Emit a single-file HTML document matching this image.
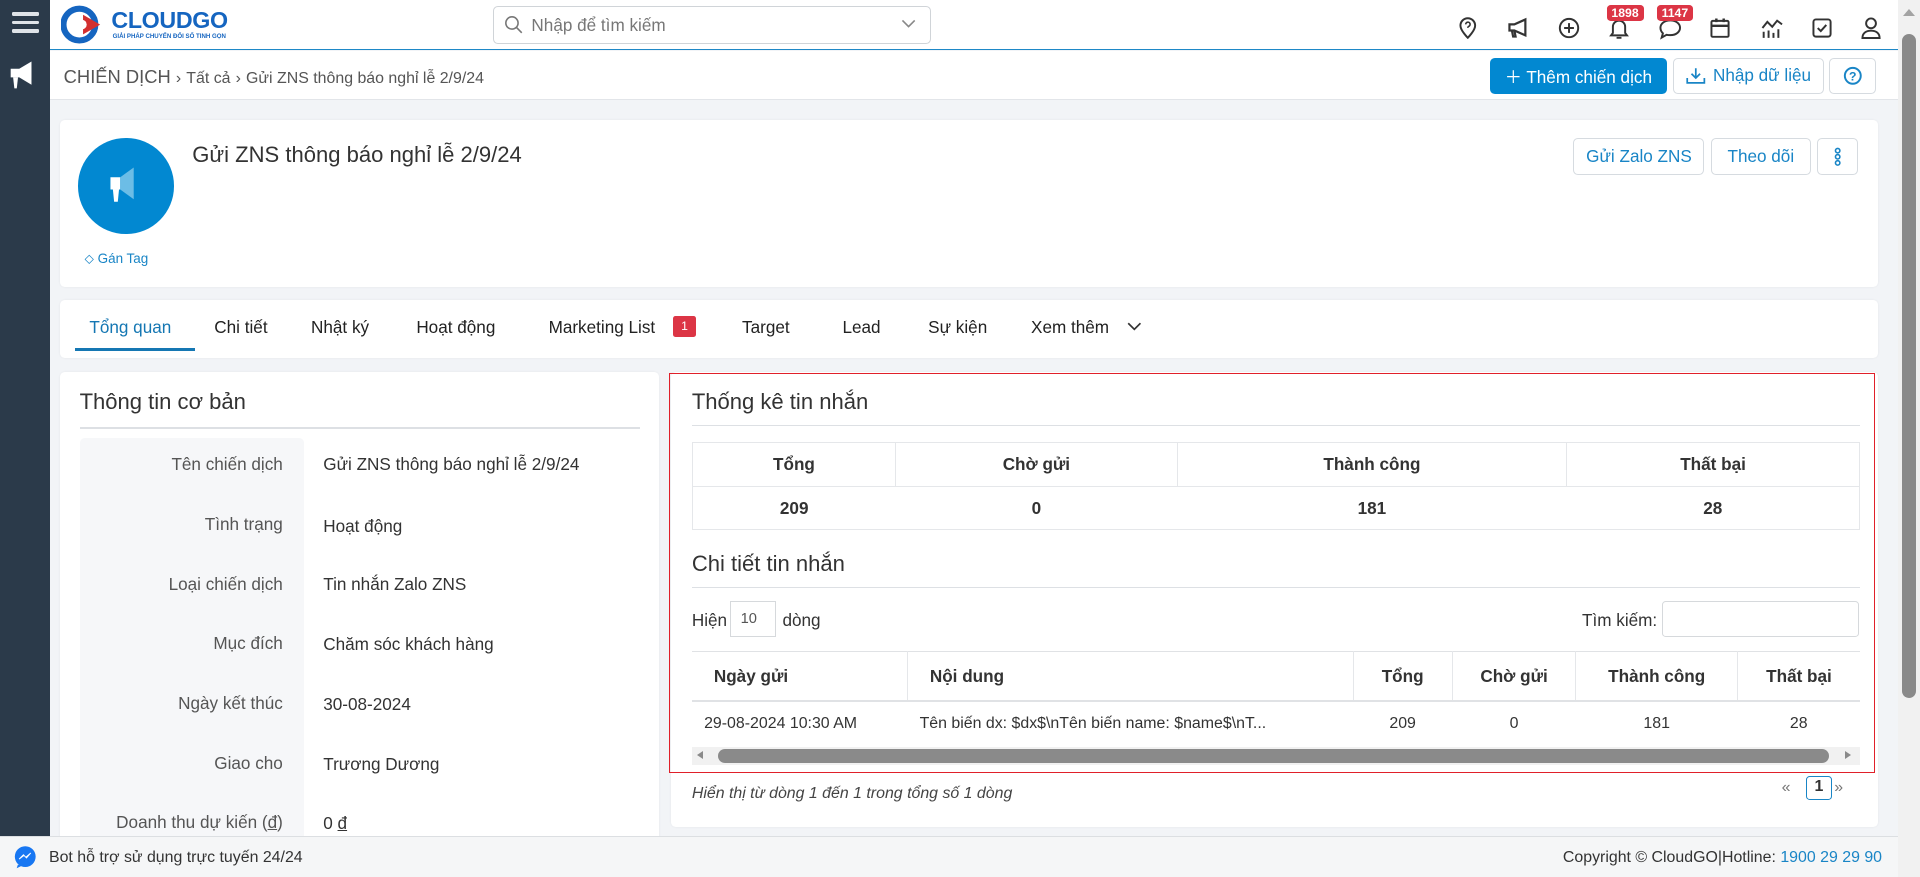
<!DOCTYPE html>
<html><head><meta charset="utf-8"><style>
html{zoom:1.22449}
*{box-sizing:border-box;margin:0;padding:0}
body{width:1568px;height:716px;overflow:hidden;position:relative;background:#f2f4f7;font-family:"Liberation Sans",sans-serif;color:#333;font-size:14px}
.a{position:absolute}
.side{left:0;top:0;width:41px;height:716px;background:#2b3a4a}
.top{left:41px;top:0;width:1509px;height:41px;background:#fff;border-bottom:1px solid #1e88c7}
.bc{left:41px;top:42px;width:1509px;height:40px;background:#fff;border-bottom:1px solid #e2e5e9}
.card{background:#fff;border-radius:4px;box-shadow:0 0 2px rgba(0,0,0,.06)}
.btn{border:1px solid #d6dbe0;border-radius:4px;background:#fff;color:#1985c6;font-size:14px;display:flex;align-items:center;justify-content:center}
.ico{stroke:#333;fill:none;stroke-width:1.6}
.tab{top:259px;font-size:14px;color:#222}
.lbl{width:166px;text-align:right;left:65px;color:#555;font-size:14px}
.val{left:264px;color:#333;font-size:14px}
table{border-collapse:collapse;font-size:14px}
td,th{text-align:center}
</style></head><body>
<div class="a side">
 <div class="a" style="left:10px;top:10px;width:22px;height:3px;background:#dfe3e8;border-radius:1px"></div>
 <div class="a" style="left:10px;top:17px;width:22px;height:3px;background:#dfe3e8;border-radius:1px"></div>
 <div class="a" style="left:10px;top:24px;width:22px;height:3px;background:#dfe3e8;border-radius:1px"></div>
 <svg class="a" style="left:6px;top:48px" width="28" height="30" viewBox="0 0 28 30"><path d="M3 8h7v7H3z M10 8l10-6v19l-10-6z" fill="#fff"/><path d="M5 15h4l-1 9H6z" fill="#fff"/></svg>
</div>
<div class="a top">
 <svg class="a" style="left:9px;top:4px" width="34" height="32" viewBox="0 0 34 32"><circle cx="15" cy="16" r="13" fill="none" stroke="#1565c0" stroke-width="5"/><path d="M18 8l14 8-14 8z" fill="#d32f2f"/><circle cx="17" cy="16" r="4" fill="#fff"/></svg>
 <div class="a" style="left:50px;top:6px;color:#1565c0;font-weight:bold;font-size:19px;letter-spacing:-.3px">CLOUDGO</div>
 <div class="a" style="left:51px;top:27px;color:#1565c0;font-size:5px;font-weight:bold">GIẢI PHÁP CHUYỂN ĐỔI SỐ TINH GỌN</div>
 <div class="a" style="left:362px;top:5px;width:357px;height:31px;border:1px solid #d0d4d8;border-radius:4px"></div>
 <svg class="a" style="left:371px;top:12px" width="16" height="16"><circle cx="6.5" cy="6.5" r="5" stroke="#777" fill="none" stroke-width="1.3"/><path d="M10 10l4.5 4.5" stroke="#777" stroke-width="1.3"/></svg>
 <div class="a" style="left:393px;top:12px;color:#777;font-size:14px">Nhập để tìm kiếm</div>
 <svg class="a" style="left:694px;top:15px" width="14" height="10"><path d="M2 2l5 5 5-5" stroke="#888" fill="none" stroke-width="1.3"/></svg>
 <svg class="a ico" style="left:1150px;top:14px" width="16" height="18" viewBox="0 0 16 18"><path d="M8 17s6-6 6-10A6 6 0 0 0 2 7c0 4 6 10 6 10z"/><path d="M6.3 6a1.8 1.8 0 1 1 2.4 1.7c-.6.3-.7.6-.7 1.2" stroke-width="1.3"/></svg>
 <svg class="a ico" style="left:1190px;top:14px" width="20" height="18" viewBox="0 0 20 18"><path d="M2 6h4l9-4v13l-9-4H2z M4 11l1 5h2l-1-5" stroke-width="1.8"/></svg>
 <svg class="a ico" style="left:1231px;top:14px" width="18" height="18"><circle cx="9" cy="9" r="7.5"/><path d="M9 5v8M5 9h8"/></svg>
 <svg class="a ico" style="left:1272px;top:14px" width="18" height="19"><path d="M4 13V8a5 5 0 0 1 10 0v5l1.5 2h-13z M7 17h4"/></svg>
 <div class="a" style="left:1271px;top:4px;background:#dc3545;color:#fff;font-size:10px;font-weight:bold;padding:1px 4px;border-radius:3px">1898</div>
 <svg class="a ico" style="left:1313px;top:15px" width="20" height="18"><path d="M10 2c5 0 8 2.8 8 6s-3 6-8 6c-1 0-2 0-3-.3L3 16l1-3.5C2.8 11.4 2 10 2 8c0-3.2 3-6 8-6z"/></svg>
 <div class="a" style="left:1312px;top:4px;background:#dc3545;color:#fff;font-size:10px;font-weight:bold;padding:1px 4px;border-radius:3px">1147</div>
 <svg class="a ico" style="left:1355px;top:13px" width="18" height="19"><rect x="2" y="4" width="14" height="13" rx="1"/><path d="M2 8h14M6 2v3M12 2v3" stroke-width="2"/></svg>
 <svg class="a ico" style="left:1396px;top:14px" width="20" height="18"><path d="M2 9l4-5 4 4 4-5 4 3M3 17v-5M7 17v-6M11 17v-4M15 17v-7"/></svg>
 <svg class="a ico" style="left:1438px;top:14px" width="18" height="18"><rect x="2" y="2" width="14" height="14" rx="2"/><path d="M5.5 9l2.5 2.5 4.5-5"/></svg>
 <svg class="a ico" style="left:1478px;top:13px" width="18" height="19"><circle cx="9" cy="6" r="4"/><path d="M2 18c0-4 3-6 7-6s7 2 7 6z"/></svg>
</div>
<div class="a" style="left:1550px;top:0;width:18px;height:716px;background:#f1f1f1"></div>
<div class="a" style="left:1553px;top:28px;width:12px;height:542px;background:#8a8a8a;border-radius:6px"></div>
<div class="a" style="left:1554px;top:7px;width:0;height:0;border-left:5px solid transparent;border-right:5px solid transparent;border-bottom:6px solid #a3a3a3"></div>
<div class="a bc">
 <div class="a" style="left:11px;top:12px;color:#555;font-size:15px">CHIẾN DỊCH <span style="font-size:13px">›</span> <span style="font-size:13px">Tất cả</span> <span style="font-size:13px">›</span> <span style="font-size:13px">Gửi ZNS thông báo nghỉ lễ 2/9/24</span></div>
</div>
<div class="a btn" style="left:1217px;top:47px;width:144px;height:30px;background:#0288d1;border-color:#0288d1;color:#fff">＋ Thêm chiến dịch</div>
<div class="a btn" style="left:1366px;top:47px;width:124px;height:30px">
 <svg width="16" height="14" style="margin-right:6px"><path d="M8 1v8M4.5 5.5L8 9l3.5-3.5M1 9v4h14V9" stroke="#1985c6" fill="none" stroke-width="1.4"/></svg>Nhập dữ liệu</div>
<div class="a btn" style="left:1494px;top:47px;width:38px;height:30px"><svg width="16" height="16"><circle cx="8" cy="8" r="6.5" stroke="#1985c6" fill="none" stroke-width="1.6"/><text x="8" y="12" text-anchor="middle" font-size="10" font-weight="bold" fill="#1985c6" font-family="Liberation Sans">?</text></svg></div>

<div class="a card" style="left:49px;top:98px;width:1485px;height:136px"></div>
<div class="a" style="left:64px;top:113px;width:78px;height:78px;border-radius:50%;background:#0288d1"></div>
<svg class="a" style="left:88px;top:135px" width="32" height="34" viewBox="0 0 32 34"><path d="M2 10h8v10H2z" fill="#fff"/><path d="M10 10l11-8v26l-11-8z" fill="#6cbde6"/><path d="M4 20h5l-1 10H5z" fill="#fff"/></svg>
<div class="a" style="left:157px;top:116px;font-size:18px;color:#333">Gửi ZNS thông báo nghỉ lễ 2/9/24</div>
<div class="a" style="left:69px;top:205px;font-size:11px;color:#1985c6">⬦ Gán Tag</div>
<div class="a btn" style="left:1285px;top:113px;width:107px;height:30px">Gửi Zalo ZNS</div>
<div class="a btn" style="left:1397px;top:113px;width:82px;height:30px">Theo dõi</div>
<div class="a btn" style="left:1484px;top:113px;width:33px;height:30px"><svg width="6" height="16"><circle cx="3" cy="3" r="1.8" fill="none" stroke="#1985c6" stroke-width="1.3"/><circle cx="3" cy="8" r="1.8" fill="none" stroke="#1985c6" stroke-width="1.3"/><circle cx="3" cy="13" r="1.8" fill="none" stroke="#1985c6" stroke-width="1.3"/></svg></div>

<div class="a card" style="left:49px;top:245px;width:1485px;height:47px"></div>
<div class="a tab" style="left:73px;color:#1577b3">Tổng quan</div>
<div class="a" style="left:61px;top:284px;width:98px;height:3px;background:#1577b3"></div>
<div class="a tab" style="left:175px">Chi tiết</div>
<div class="a tab" style="left:254px">Nhật ký</div>
<div class="a tab" style="left:340px">Hoạt động</div>
<div class="a tab" style="left:448px">Marketing List</div>
<div class="a" style="left:550px;top:258px;width:18px;height:17px;background:#dc3545;color:#fff;font-size:10px;text-align:center;line-height:17px;border-radius:2px">1</div>
<div class="a tab" style="left:606px">Target</div>
<div class="a tab" style="left:688px">Lead</div>
<div class="a tab" style="left:758px">Sự kiện</div>
<div class="a tab" style="left:842px">Xem thêm</div>
<svg class="a" style="left:920px;top:263px" width="12" height="8"><path d="M1 1l5 5 5-5" stroke="#333" fill="none" stroke-width="1.4"/></svg>

<div class="a card" style="left:49px;top:304px;width:489px;height:400px"></div>
<div class="a" style="left:65px;top:318px;font-size:18px;color:#333">Thông tin cơ bản</div>
<div class="a" style="left:65px;top:349px;width:458px;height:1px;background:#dde0e4"></div>
<div class="a" style="left:65px;top:358px;width:183px;height:340px;background:#f6f7f9;border-radius:4px 4px 0 0"></div>
<div class="a lbl" style="top:371px">Tên chiến dịch</div><div class="a val" style="top:371px">Gửi ZNS thông báo nghỉ lễ 2/9/24</div>
<div class="a lbl" style="top:420px">Tình trạng</div><div class="a val" style="top:421px">Hoạt động</div>
<div class="a lbl" style="top:469px">Loại chiến dịch</div><div class="a val" style="top:469px">Tin nhắn Zalo ZNS</div>
<div class="a lbl" style="top:517px">Mục đích</div><div class="a val" style="top:518px">Chăm sóc khách hàng</div>
<div class="a lbl" style="top:566px">Ngày kết thúc</div><div class="a val" style="top:567px">30-08-2024</div>
<div class="a lbl" style="top:615px">Giao cho</div><div class="a val" style="top:616px">Trương Dương</div>
<div class="a lbl" style="top:663px">Doanh thu dự kiến (<u>đ</u>)</div><div class="a val" style="top:664px">0 <u>đ</u></div>

<div class="a card" style="left:548px;top:304px;width:986px;height:371px"></div>
<div class="a" style="left:546px;top:305px;width:985px;height:326px;border:1px solid #e0202a"></div>
<div class="a" style="left:565px;top:318px;font-size:18px">Thống kê tin nhắn</div>
<div class="a" style="left:565px;top:347px;width:954px;height:1px;background:#dde0e4"></div>
<table class="a" style="left:565px;top:361px;width:954px;border:1px solid #e5e7ea">
<tr style="height:36px;border-bottom:1px solid #e5e7ea"><th style="width:166px;font-weight:600;border-right:1px solid #e5e7ea">Tổng</th><th style="width:230px;font-weight:600;border-right:1px solid #e5e7ea">Chờ gửi</th><th style="width:318px;font-weight:600;border-right:1px solid #e5e7ea">Thành công</th><th style="font-weight:600">Thất bại</th></tr>
<tr style="height:35px;font-weight:bold"><td>209</td><td>0</td><td>181</td><td>28</td></tr></table>
<div class="a" style="left:565px;top:450px;font-size:18px">Chi tiết tin nhắn</div>
<div class="a" style="left:565px;top:479px;width:954px;height:1px;background:#dde0e4"></div>
<div class="a" style="left:565px;top:498px">Hiện</div>
<div class="a" style="left:596px;top:491px;width:38px;height:29px;border:1px solid #d6d9dc;font-size:12px;padding:7px 0 0 8px;color:#555">10</div>
<div class="a" style="left:639px;top:498px">dòng</div>
<div class="a" style="left:1292px;top:498px">Tìm kiếm:</div>
<div class="a" style="left:1357px;top:491px;width:161px;height:29px;border:1px solid #d6d9dc;border-radius:3px"></div>
<table class="a" style="left:565px;top:532px;width:954px;border-top:1px solid #e0e2e5">
<tr style="height:40px;border-bottom:2px solid #e0e2e5"><th style="width:176px;text-align:left;padding-left:18px;font-weight:600;border-right:1px solid #e5e7ea">Ngày gửi</th><th style="width:364px;text-align:left;padding-left:18px;font-weight:600;border-right:1px solid #e5e7ea">Nội dung</th><th style="width:81px;font-weight:600;border-right:1px solid #e5e7ea">Tổng</th><th style="width:101px;font-weight:600;border-right:1px solid #e5e7ea">Chờ gửi</th><th style="width:132px;font-weight:600;border-right:1px solid #e5e7ea">Thành công</th><th style="font-weight:600">Thất bại</th></tr>
<tr style="height:37px;font-size:13px"><td style="text-align:left;padding-left:10px">29-08-2024 10:30 AM</td><td style="text-align:left;padding-left:10px">Tên biến dx: $dx$\nTên biến name: $name$\nT...</td><td>209</td><td>0</td><td>181</td><td>28</td></tr></table>
<div class="a" style="left:565px;top:610px;width:954px;height:15px;background:#f1f1f1"></div>
<div class="a" style="left:586px;top:612px;width:908px;height:11px;background:#8a8a8a;border-radius:6px"></div>
<div class="a" style="left:569px;top:613px;border-top:4px solid transparent;border-bottom:4px solid transparent;border-right:5px solid #8a8a8a"></div>
<div class="a" style="left:1507px;top:613px;border-top:4px solid transparent;border-bottom:4px solid transparent;border-left:5px solid #8a8a8a"></div>
<div class="a" style="left:565px;top:641px;font-size:13px;font-style:italic;color:#444">Hiển thị từ dòng 1 đến 1 trong tổng số 1 dòng</div>
<div class="a" style="left:1455px;top:636px;font-size:13px;color:#777">«</div>
<div class="a" style="left:1475px;top:634px;width:21px;height:19px;border:1px solid #1985c6;border-radius:3px;font-size:13px;font-weight:bold;text-align:center;line-height:17px">1</div>
<div class="a" style="left:1498px;top:636px;font-size:13px;color:#777">»</div>

<div class="a" style="left:0;top:683px;width:1550px;height:33px;background:#f5f6f7;border-top:1px solid #dcdfe2"></div>
<svg class="a" style="left:11px;top:690px" width="20" height="20"><circle cx="10" cy="9.5" r="8.5" fill="#1877f2"/><path d="M4 16l-1 3 4-2z" fill="#1877f2"/><path d="M5 11.5l3.5-3.5 2 2 4-3.5-3.5 4-2-2z" fill="#fff" stroke="#fff" stroke-width=".8"/></svg>
<div class="a" style="left:40px;top:693px;font-size:13px">Bot hỗ trợ sử dụng trực tuyến 24/24</div>
<div class="a" style="right:31px;top:693px;font-size:13px">Copyright © CloudGO|Hotline: <span style="color:#1985c6">1900 29 29 90</span></div>
</body></html>
